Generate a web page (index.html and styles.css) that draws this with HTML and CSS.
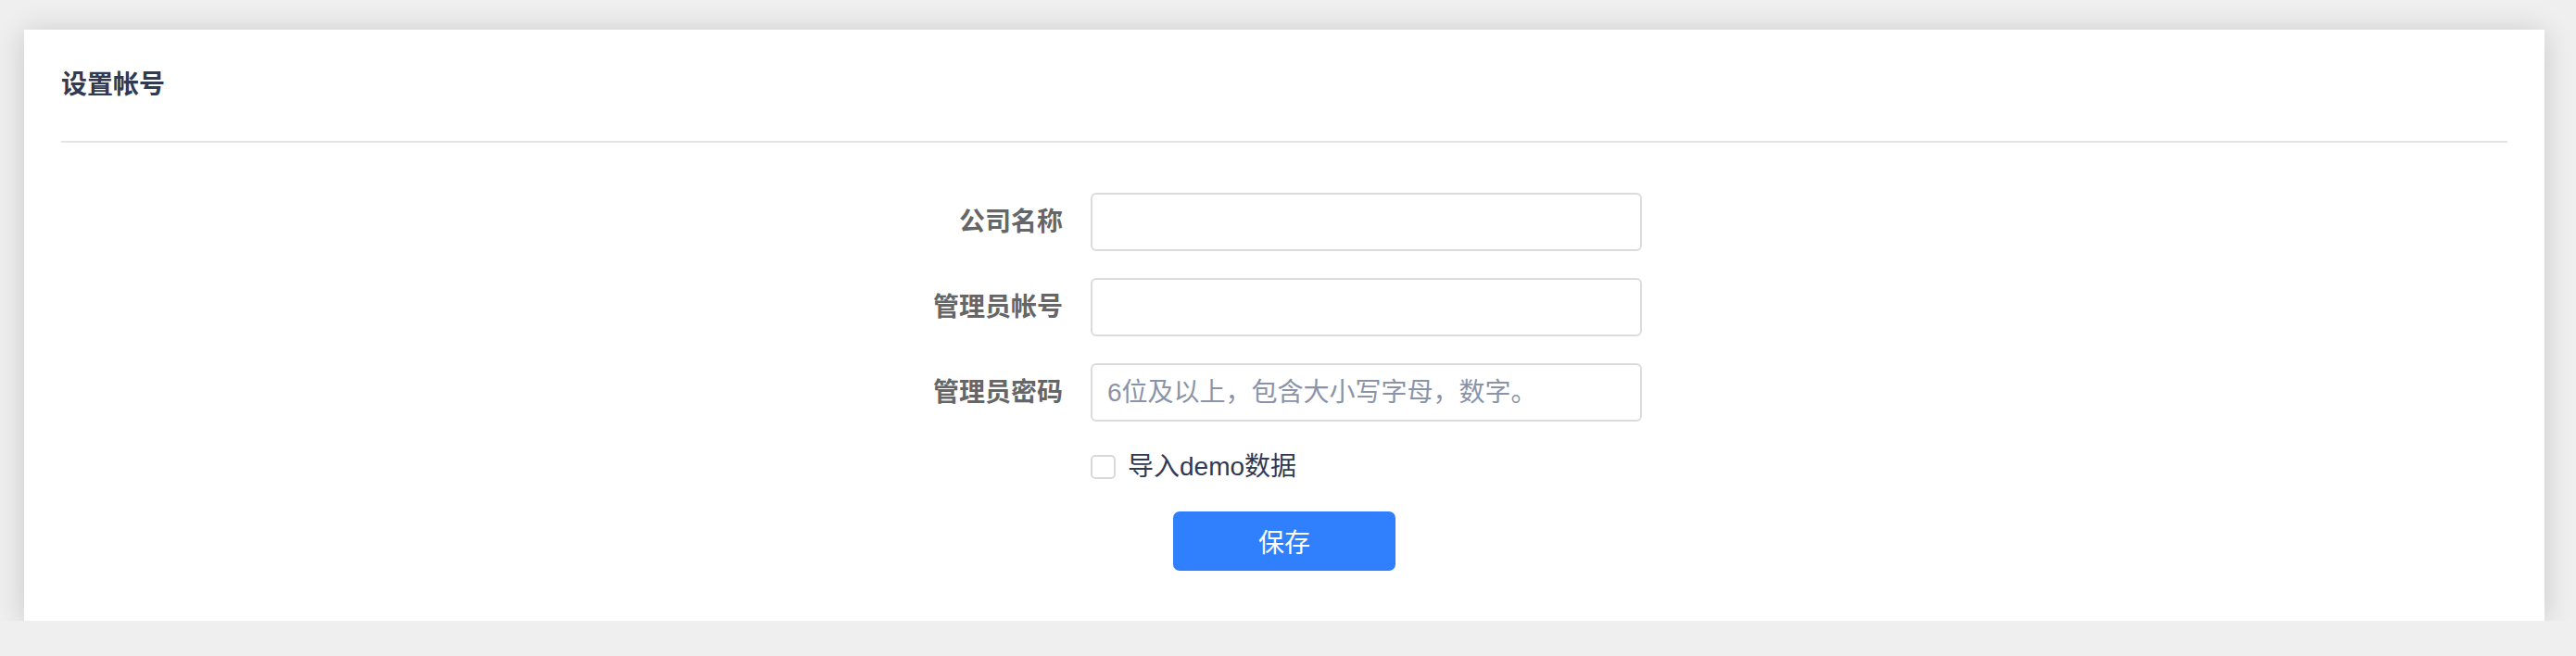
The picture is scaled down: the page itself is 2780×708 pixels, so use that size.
FILE: index.html
```html
<!DOCTYPE html>
<html lang="zh-CN">
<head>
<meta charset="utf-8">
<title>设置帐号</title>
<link rel="stylesheet" href="styles.css">
</head>
<body>
  <section class="card">
    <header class="card-header">
      <h2 class="card-title">设置帐号</h2>
    </header>
    <form class="account-form">
      <div class="form-row">
        <label class="form-label" for="company">公司名称</label>
        <input class="form-input" id="company" type="text">
      </div>
      <div class="form-row">
        <label class="form-label" for="account">管理员帐号</label>
        <input class="form-input" id="account" type="text">
      </div>
      <div class="form-row">
        <label class="form-label" for="password">管理员密码</label>
        <input class="form-input" id="password" type="password" placeholder="6位及以上，包含大小写字母，数字。">
      </div>
      <div class="form-check">
        <label class="check">
          <input class="check-input" type="checkbox">
          <span class="check-box"></span>
          <span class="check-text">导入demo数据</span>
        </label>
      </div>
    </form>
    <div class="actions">
      <button class="btn-primary" type="button">保存</button>
    </div>
  </section>
</body>
</html>
```
FILE: styles.css
```css
* {
  box-sizing: border-box;
}

html, body {
  margin: 0;
  background: #efefef;
}

body {
  padding: 32px 34px 0 26px;
  font-family: "Liberation Sans", "Noto Sans CJK SC", sans-serif;
}

.card {
  background: #fff;
  box-shadow: 0 2px 30px rgba(0, 0, 0, 0.16);
  padding: 0 40px 54px;
  height: 638px;
}

.card-header {
  padding: 40px 0;
  border-bottom: 2px solid #e3e3e3;
}

.card-title {
  margin: 0;
  font-size: 28px;
  line-height: 40px;
  font-weight: 700;
  color: #303a52;
}

.account-form {
  width: 772px;
  margin: 54px auto 0;
  display: flex;
  flex-direction: column;
  gap: 29px;
}

.form-row {
  display: grid;
  grid-template-columns: 147px 595px;
  column-gap: 30px;
  align-items: center;
}

.form-label {
  text-align: right;
  font-size: 28px;
  font-weight: 700;
  color: #666;
  line-height: 40px;
}

.form-input {
  height: 63px;
  width: 100%;
  border: 2px solid #dcdcdc;
  border-radius: 6px;
  padding: 0 16px;
  font-family: "Liberation Sans", "Noto Sans CJK SC", sans-serif;
  font-size: 28px;
  color: #303a52;
  outline: none;
  background: #fff;
}

.form-input::placeholder {
  color: #8a93a7;
}

.form-check {
  padding-left: 177px;
  margin-top: 7px;
}

.check {
  display: flex;
  align-items: center;
  height: 26px;
  cursor: pointer;
}

.check-input {
  display: none;
}

.check-box {
  width: 27px;
  height: 26px;
  border: 2px solid #d9d9d9;
  border-radius: 5px;
  background: #fff;
  flex: none;
}

.check-text {
  margin-left: 13px;
  font-size: 28px;
  line-height: 40px;
  color: #303a52;
}

.actions {
  display: flex;
  justify-content: center;
  margin-top: 35px;
}

.btn-primary {
  width: 240px;
  height: 64px;
  border: none;
  border-radius: 7px;
  background: #3080fe;
  color: #fff;
  font-family: "Liberation Sans", "Noto Sans CJK SC", sans-serif;
  font-size: 28px;
  cursor: pointer;
}
```
